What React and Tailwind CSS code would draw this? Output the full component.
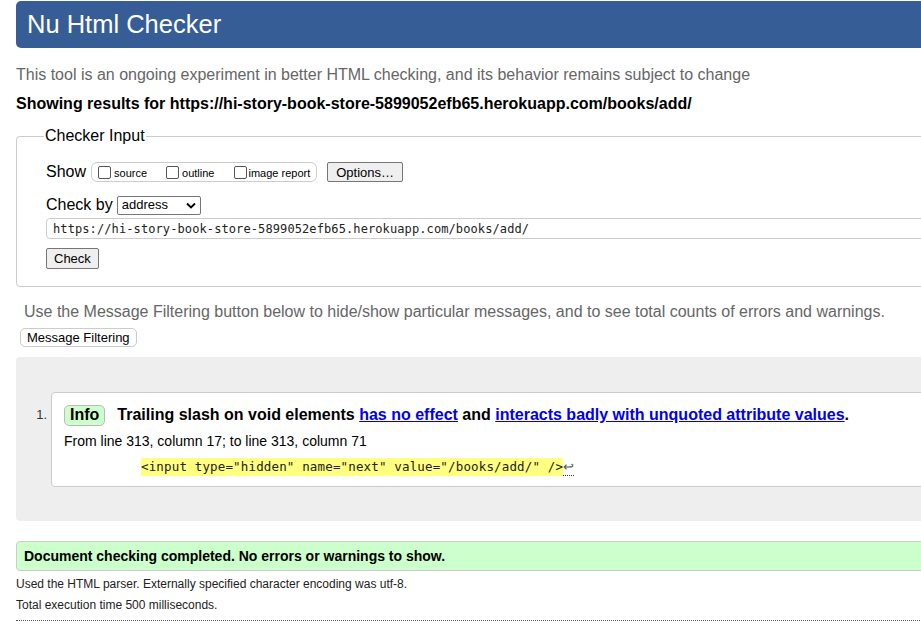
export default function App() {
  return (
    <div className="w-[921px] h-[632px] overflow-hidden bg-white font-['Liberation_Sans',Arial,sans-serif] text-black">
      <div className="w-[1200px] pl-[16px] pt-[1px]">
        {/* header */}
        <div className="h-[47px] bg-[#365d95] rounded-l-[5px] flex items-center pl-[11px]">
          <h1 className="text-[25.5px] text-white leading-none">Nu Html Checker</h1>
        </div>

        <p className="mt-[18px] text-[16px] leading-[18px] text-[#666]">
          This tool is an ongoing experiment in better HTML checking, and its behavior remains subject to change
        </p>
        <p className="mt-[11px] text-[16px] leading-[18px] font-bold">
          Showing results for https://hi-story-book-store-5899052efb65.herokuapp.com/books/add/
        </p>

        {/* checker input */}
        <fieldset className="mt-[14px] border border-[#ccc] rounded-l-[4px] pl-[29px] pb-[17px] relative">
          <legend className="ml-[-2px] px-[1px] text-[16px] leading-[18px]">Checker Input</legend>
          <div className="flex items-center mt-[17px] h-[20px]">
            <span className="text-[16px]">Show</span>
            <div className="ml-[5px] h-[20px] border border-[#ccc] rounded-[6px] flex items-center px-[6px] text-[11px]">
              <label className="flex items-center">
                <span className="w-[13px] h-[13px] border border-[#555] rounded-[2px] bg-white inline-block" />
                <span className="ml-[3px] mt-[2px]">source</span>
              </label>
              <label className="flex items-center ml-[19px]">
                <span className="w-[13px] h-[13px] border border-[#555] rounded-[2px] bg-white inline-block" />
                <span className="ml-[3px] mt-[2px]">outline</span>
              </label>
              <label className="flex items-center ml-[20px]">
                <span className="w-[13px] h-[13px] border border-[#555] rounded-[2px] bg-white inline-block" />
                <span className="ml-[1px] mt-[2px]">image report</span>
              </label>
            </div>
            <button className="ml-[10px] h-[20px] px-[8px] border border-[#767676] rounded-[2px] bg-[#efefef] text-[13px] leading-none">
              Options…
            </button>
          </div>
          <div className="flex items-center mt-[13px] h-[20px]">
            <span className="text-[16px]">Check by</span>
            <div className="ml-[4px] w-[84px] h-[19px] border border-[#767676] rounded-[2px] flex items-center justify-between px-[4px] text-[13px]">
              <span>address</span>
              <svg width="10" height="7" viewBox="0 0 10 7">
                <path d="M1 1.5 L5 5.5 L9 1.5" stroke="#000" strokeWidth="1.8" fill="none" />
              </svg>
            </div>
          </div>
          <div className="mt-[3px] h-[21px] border border-[#ccc] rounded-l-[4px] flex items-center pl-[6px] font-['DejaVu_Sans_Mono',monospace] text-[12px] tracking-[0.1px] text-[#222]">
            https://hi-story-book-store-5899052efb65.herokuapp.com/books/add/
          </div>
          <button className="mt-[9px] h-[21px] px-[7px] border border-[#767676] rounded-[2px] bg-[#efefef] text-[13px] leading-none block">
            Check
          </button>
        </fieldset>

        <p className="mt-[16px] ml-[8px] text-[16px] leading-[18px] text-[#666]">
          Use the Message Filtering button below to hide/show particular messages, and to see total counts of errors and warnings.
        </p>
        <button className="mt-[7px] ml-[4px] h-[19px] px-[6px] border border-[#ccc] rounded-[5px] bg-white text-[13px] leading-none block">
          Message Filtering
        </button>

        {/* results */}
        <div className="mt-[10px] bg-[#eee] rounded-l-[4px] pt-[35px] pb-[34px] flex">
          <div className="w-[35px] shrink-0 text-right pr-[4px] pt-[13px] text-[13px] text-[#333]">1.</div>
          <div className="flex-1 bg-white border border-[#ccc] rounded-l-[4px] pl-[12px] pt-[10px] pb-[10px]">
            <div className="flex items-center">
              <span className="h-[21px] px-[5px] bg-[#ccffcc] border border-[#bbb] rounded-[5px] text-[16px] font-bold flex items-center">
                Info
              </span>
              <span className="ml-[12px] text-[16px] font-bold">
                Trailing slash on void elements{" "}
                <a className="text-[#00e] underline" href="#">has no effect</a> and{" "}
                <a className="text-[#00e] underline" href="#">interacts badly with unquoted attribute values</a>.
              </span>
            </div>
            <p className="mt-[6px] text-[14px] leading-[16px]">From line 313, column 17; to line 313, column 71</p>
            <p className="mt-[9px] ml-[77px] flex items-end text-[13px]">
              <code className="bg-[#ffff80] h-[18px] flex items-center font-['DejaVu_Sans_Mono',monospace] text-[12.5px] tracking-[0.15px] text-[#222]">
                {'<input type="hidden" name="next" value="/books/add/" />'}
              </code>
              <span className="border-b border-dotted border-[#333] leading-[16px] text-[#555] text-[13px]">↩</span>
            </p>
          </div>
        </div>

        <div className="mt-[20px] h-[30px] bg-[#ccffcc] border border-[#ccc] rounded-l-[4px] flex items-center pl-[7px]">
          <span className="text-[14px] font-bold">Document checking completed. No errors or warnings to show.</span>
        </div>
        <p className="mt-[6px] text-[12px] leading-[14px] text-[#222]">
          Used the HTML parser. Externally specified character encoding was utf-8.
        </p>
        <p className="mt-[7px] text-[12px] leading-[14px] text-[#222]">Total execution time 500 milliseconds.</p>
        <div className="mt-[8px] border-t border-dotted border-[#555]" />
      </div>
    </div>
  );
}
